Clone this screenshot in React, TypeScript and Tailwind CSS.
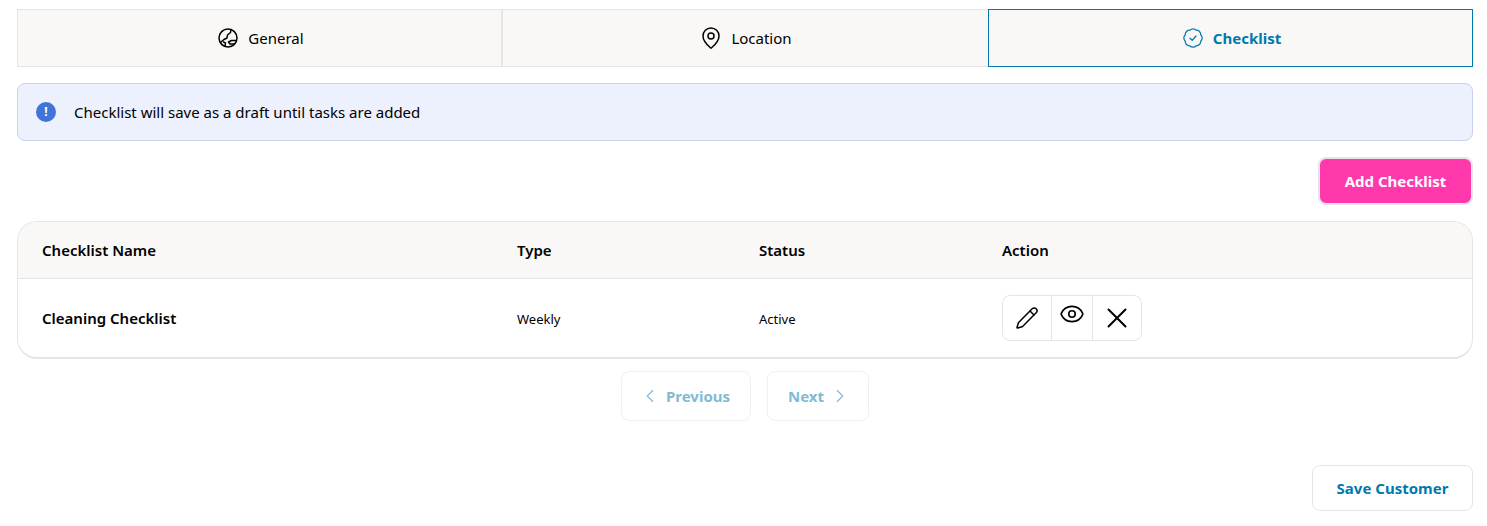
import { ChevronLeft, ChevronRight, Eye, MapPin, Pencil, X } from 'lucide-react';

function GlobeIcon() {
  return (
    <svg viewBox="0 0 20 20" fill="none" stroke="currentColor" strokeWidth="1.5" strokeLinecap="round" strokeLinejoin="round" className="w-5 h-5">
      <circle cx="10" cy="10" r="9" />
      <path d="M13 1.5 L12.5 4.5 L9.5 7 L9 10 L6 11.5 L2.5 14.5" />
      <path d="M18 12.5 H13.5 L10.5 14 L12 16 H16" />
      <path d="M7 18 L7.5 15 L5.5 14" />
    </svg>
  );
}

// round badge with shallow scallops, closer to a circle than lucide's BadgeCheck
function CheckBadgeIcon() {
  const points = Array.from({ length: 8 }, (_, i) => {
    const a = ((i * 45 + 22.5) * Math.PI) / 180;
    return [10 + 8.4 * Math.cos(a), 10 + 8.4 * Math.sin(a)];
  });
  const d =
    `M${points[0][0].toFixed(2)} ${points[0][1].toFixed(2)} ` +
    points
      .slice(1)
      .concat([points[0]])
      .map((p) => `A4.4 4.4 0 0 1 ${p[0].toFixed(2)} ${p[1].toFixed(2)}`)
      .join(' ') +
    ' Z';
  return (
    <svg viewBox="0 0 20 20" fill="none" stroke="currentColor" strokeWidth="1.25" strokeLinecap="round" strokeLinejoin="round" className="w-5 h-5">
      <path d={d} />
      <path d="M7 10.2 L9.2 12.3 L13 8" />
    </svg>
  );
}

const tabClass = 'flex items-center justify-center h-full bg-[#f9f8f6] text-[15px]';

export default function App() {
  return (
    <div className="w-[1487px] h-[526px] bg-white text-black font-['Noto_Sans',sans-serif] pl-[17px] pr-[14px] pt-[9px] overflow-hidden">
      {/* Tabs */}
      <div className="grid grid-cols-[486px_485px_485px] h-[58px]">
        <button className={`${tabClass} gap-[10px] pl-[3px] border border-[#e5e5e5] border-r-2`}>
          <GlobeIcon />
          <span>General</span>
        </button>
        <button className={`${tabClass} gap-2 border-y border-[#e5e5e5]`}>
          <MapPin className="w-6 h-6" strokeWidth={1.5} />
          <span>Location</span>
        </button>
        <button className={`${tabClass} gap-[10px] pl-[3px] border border-[#0079ad] text-[#0079ad] font-bold`}>
          <CheckBadgeIcon />
          <span>Checklist</span>
        </button>
      </div>

      {/* Alert */}
      <div className="mt-4 h-[58px] flex items-center gap-[18px] px-[18px] rounded-lg border border-[#c7d3f0] bg-[#edf1fd] text-[15px]">
        <span className="w-5 h-5 rounded-full bg-[#4274d8] text-white flex items-center justify-center text-xs font-bold leading-none">!</span>
        <span>Checklist will save as a draft until tasks are added</span>
      </div>

      {/* Add */}
      <div className="mt-4 flex justify-end">
        <button className="h-[48px] w-[155px] rounded-lg bg-[#ff38ac] border-2 border-[#e4e4ec] text-white font-bold text-[15px]">
          Add Checklist
        </button>
      </div>

      {/* Table */}
      <div className="mt-4 rounded-[20px] border border-[#e5e5e5] border-b-2 overflow-hidden">
        <div className="h-[57px] grid grid-cols-[475px_242px_243px_1fr] items-center px-6 bg-[#f9f8f6] border-b border-[#e5e5e5] text-[15px] font-semibold">
          <span>Checklist Name</span>
          <span>Type</span>
          <span>Status</span>
          <span>Action</span>
        </div>
        <div className="h-[78px] grid grid-cols-[475px_242px_243px_1fr] items-center px-6">
          <span className="text-[15px] font-semibold">Cleaning Checklist</span>
          <span className="text-[13px] pt-[4px]">Weekly</span>
          <span className="text-[13px] pt-[4px]">Active</span>
          <div className="flex w-[140px] h-[46px] rounded-lg border border-[#e5e5e5]">
            <span className="w-[49px] flex items-center justify-center border-r border-[#e5e5e5]">
              <Pencil className="w-6 h-6" strokeWidth={1.5} />
            </span>
            <span className="w-[41px] flex justify-center pt-[5px] border-r border-[#e5e5e5]">
              <Eye className="w-[26px] h-[26px]" strokeWidth={1.5} />
            </span>
            <span className="flex-1 flex items-center justify-center">
              <X className="w-[34px] h-[34px] shrink-0" strokeWidth={1.4} />
            </span>
          </div>
        </div>
      </div>

      {/* Pagination */}
      <div className="mt-3 flex justify-center gap-4 text-[15px] font-bold text-[#80bbd6]">
        <button className="h-[50px] w-[130px] rounded-lg border border-[#eef0f2] flex items-center justify-center gap-[5px] pr-[3px]">
          <ChevronLeft className="w-[22px] h-[22px]" strokeWidth={1.25} />
          Previous
        </button>
        <button className="h-[50px] w-[102px] rounded-lg border border-[#eef0f2] flex items-center justify-center gap-[5px] pl-[3px]">
          Next
          <ChevronRight className="w-[22px] h-[22px]" strokeWidth={1.25} />
        </button>
      </div>

      {/* Save */}
      <div className="mt-[44px] flex justify-end">
        <button className="h-[46px] w-[161px] rounded-lg border border-[#e5e5e5] text-[#0079ad] font-bold text-[15px]">
          Save Customer
        </button>
      </div>
    </div>
  );
}
